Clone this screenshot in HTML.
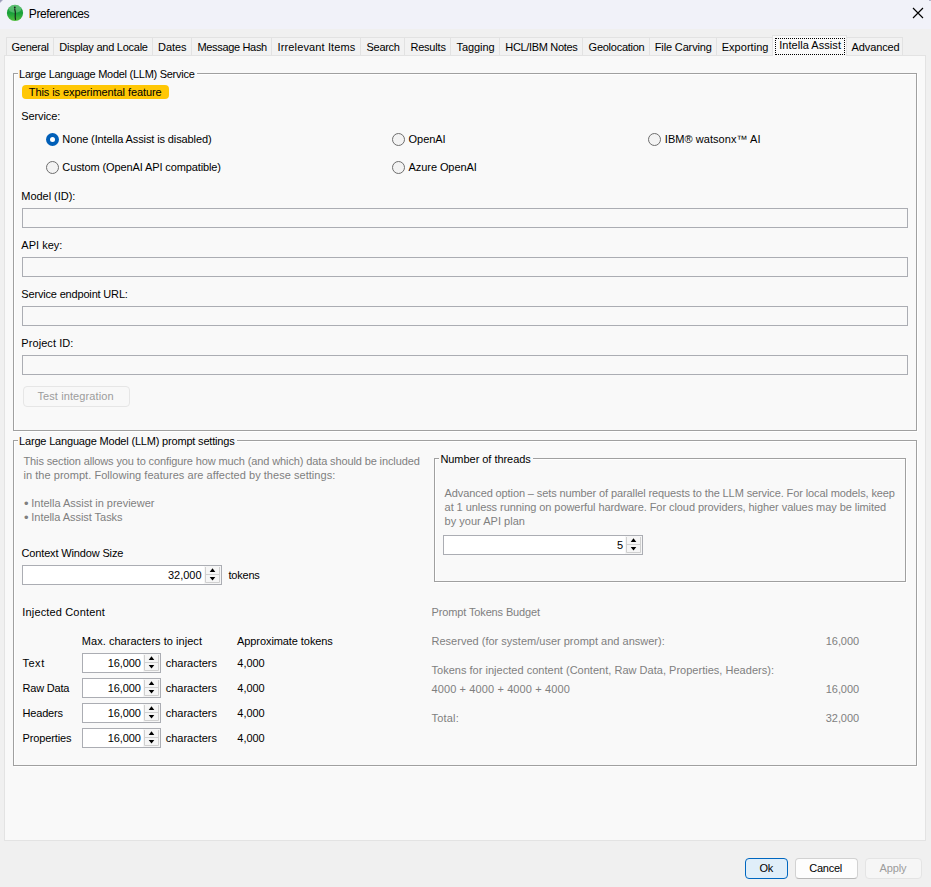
<!DOCTYPE html><html lang="en"><head><meta charset="utf-8"><title>Preferences</title><style>

*{box-sizing:border-box;margin:0;padding:0}
html,body{width:931px;height:887px;overflow:hidden;background:#f0f0f0}
body{position:relative;font-family:"Liberation Sans", sans-serif;font-size:11px;color:#000;-webkit-font-smoothing:antialiased}
.a{position:absolute}
.t{position:absolute;white-space:nowrap;line-height:12px;height:12px}
#titlebar{left:0;top:0;width:931px;height:29px;background:#f1f2f9}
#pane{left:4px;top:55px;width:922px;height:786px;background:#f9f9f9;border:1px solid #e3e3e3}
.tab{top:37px;height:18px;background:#f2f2f2;border:1px solid #e2e2e2;border-bottom:none}
.tabsel{top:35px;height:21px;background:#f9f9f9;border:1px solid #e3e3e3;border-bottom:none}
.focus{left:775px;top:38px;width:70px;height:17px;border:1px dotted #000}
.gb{border:1px solid #a0a0a0;box-shadow:1px 1px 0 #fff, inset 1px 1px 0 #fff}
.gap{background:#f9f9f9;height:3px}
.badge{left:22px;top:85px;width:147px;height:14px;border-radius:4px;background:#ffc705}
.radio{width:13px;height:13px;border-radius:50%;border:1px solid #6e6e6e;background:#f3f3f3}
.radio.on{border:none;background:#005fb8}
.radio.on::after{content:"";position:absolute;left:4px;top:4px;width:5px;height:5px;border-radius:50%;background:#fff}
.inp{left:22px;width:886px;height:20px;border:1px solid #abadb3;background:#f9f9f9}
.spin{height:20px;border:1px solid #abadb3;background:#fff}
.sbz{position:absolute;right:0;top:0}
.btn{height:21px;border-radius:4px}

</style></head><body>
<div class="a" id="titlebar"></div>
<svg class="a" style="left:6px;top:4px" width="18" height="18" viewBox="0 0 18 18">
<defs><linearGradient id="g" x1="0" y1="0" x2="0" y2="1"><stop offset="0" stop-color="#35b04e"/><stop offset="0.5" stop-color="#18a03a"/><stop offset="1" stop-color="#52be3e"/></linearGradient></defs>
<circle cx="9" cy="8.9" r="8.1" fill="url(#g)"/>
<ellipse cx="9" cy="5" rx="6.2" ry="3.9" fill="#fff" fill-opacity="0.22"/>
<circle cx="8.8" cy="3.5" r="0.9" fill="#18281a"/>
<path d="M8.7 5 Q9.6 8 9.3 10.5 Q9 13.5 9.5 15.4" stroke="#18281a" stroke-width="1.2" fill="none" stroke-linecap="round"/>
</svg>
<div class="a" style="left:0;top:0;width:3px;height:3px;clip-path:polygon(0 0,100% 0,0 100%);background:linear-gradient(135deg,#8f8fae,#d0d0e0)"></div>
<div class="a" style="left:929px;top:0;width:2px;height:1px;background:#b4b4c8"></div>
<svg class="a" style="left:912px;top:7px" width="12" height="12" viewBox="0 0 12 12"><path d="M1 1 L11 11 M11 1 L1 11" stroke="#000" stroke-width="1.15" fill="none"/></svg>
<div class="a" id="pane"></div>
<div class="a tab" style="left:6px;width:48px"></div>
<div class="a tab" style="left:53px;width:100px"></div>
<div class="a tab" style="left:152px;width:40px"></div>
<div class="a tab" style="left:191px;width:81px"></div>
<div class="a tab" style="left:271px;width:90px"></div>
<div class="a tab" style="left:360px;width:45px"></div>
<div class="a tab" style="left:404px;width:47px"></div>
<div class="a tab" style="left:450px;width:50px"></div>
<div class="a tab" style="left:499px;width:84px"></div>
<div class="a tab" style="left:582px;width:68px"></div>
<div class="a tab" style="left:649px;width:68px"></div>
<div class="a tab" style="left:716px;width:58px"></div>
<div class="a tab" style="left:846px;width:57px"></div>
<div class="a tabsel" style="left:772px;width:75px"></div>
<div class="a focus"></div>
<div class="a gb" style="left:13px;top:73px;width:904px;height:358px"></div>
<div class="a gap" style="left:18px;top:72px;width:179px"></div>
<div class="a gb" style="left:13px;top:440px;width:904px;height:326px"></div>
<div class="a gap" style="left:18px;top:439px;width:219px"></div>
<div class="a gb" style="left:434px;top:458px;width:472px;height:124px"></div>
<div class="a gap" style="left:439px;top:457px;width:94px"></div>
<div class="a badge"></div>
<div class="a radio on" style="left:46px;top:133px"></div>
<div class="a radio" style="left:46px;top:161px"></div>
<div class="a radio" style="left:392px;top:133px"></div>
<div class="a radio" style="left:392px;top:161px"></div>
<div class="a radio" style="left:648px;top:133px"></div>
<div class="a inp" style="top:208px"></div>
<div class="a inp" style="top:257px"></div>
<div class="a inp" style="top:306px"></div>
<div class="a inp" style="top:355px"></div>
<div class="a btn" style="left:23px;top:386px;width:107px;border:1px solid #e6e6e6;background:#f8f8f8"></div>
<div class="a spin" style="left:22px;top:565px;width:200px"><svg class="sbz" width="17" height="18" viewBox="0 0 17 18"><rect width="17" height="18" fill="#f6f6f6"/><path d="M1.5 1V16.5H15.5V1M1.5 8.5H15.5" fill="none" stroke="#d0d0d0"/><path d="M5.7 6H11.3L8.5 2.3Z M5.7 11.1H11.3L8.5 14.6Z" fill="#000"/></svg></div>
<div class="a spin" style="left:82px;top:653px;width:79px"><svg class="sbz" width="17" height="18" viewBox="0 0 17 18"><rect width="17" height="18" fill="#f6f6f6"/><path d="M1.5 1V16.5H15.5V1M1.5 8.5H15.5" fill="none" stroke="#d0d0d0"/><path d="M5.7 6H11.3L8.5 2.3Z M5.7 11.1H11.3L8.5 14.6Z" fill="#000"/></svg></div>
<div class="a spin" style="left:82px;top:678px;width:79px"><svg class="sbz" width="17" height="18" viewBox="0 0 17 18"><rect width="17" height="18" fill="#f6f6f6"/><path d="M1.5 1V16.5H15.5V1M1.5 8.5H15.5" fill="none" stroke="#d0d0d0"/><path d="M5.7 6H11.3L8.5 2.3Z M5.7 11.1H11.3L8.5 14.6Z" fill="#000"/></svg></div>
<div class="a spin" style="left:82px;top:703px;width:79px"><svg class="sbz" width="17" height="18" viewBox="0 0 17 18"><rect width="17" height="18" fill="#f6f6f6"/><path d="M1.5 1V16.5H15.5V1M1.5 8.5H15.5" fill="none" stroke="#d0d0d0"/><path d="M5.7 6H11.3L8.5 2.3Z M5.7 11.1H11.3L8.5 14.6Z" fill="#000"/></svg></div>
<div class="a spin" style="left:82px;top:728px;width:79px"><svg class="sbz" width="17" height="18" viewBox="0 0 17 18"><rect width="17" height="18" fill="#f6f6f6"/><path d="M1.5 1V16.5H15.5V1M1.5 8.5H15.5" fill="none" stroke="#d0d0d0"/><path d="M5.7 6H11.3L8.5 2.3Z M5.7 11.1H11.3L8.5 14.6Z" fill="#000"/></svg></div>
<div class="a spin" style="left:443px;top:535px;width:200px"><svg class="sbz" width="17" height="18" viewBox="0 0 17 18"><rect width="17" height="18" fill="#f6f6f6"/><path d="M1.5 1V16.5H15.5V1M1.5 8.5H15.5" fill="none" stroke="#d0d0d0"/><path d="M5.7 6H11.3L8.5 2.3Z M5.7 11.1H11.3L8.5 14.6Z" fill="#000"/></svg></div>
<div class="a btn" style="left:745px;top:858px;width:43px;border:1px solid #0067c0;background:#e0eef9"></div>
<div class="a btn" style="left:795px;top:858px;width:63px;border:1px solid #d2d2d2;border-bottom-color:#b8b8b8;background:#fdfdfd"></div>
<div class="a btn" style="left:865px;top:858px;width:57px;border:1px solid #e4e4e4;background:#f6f6f6"></div>
<span class="t" id="t0" style="left:28.80px;top:8.0px;font-size:12px;letter-spacing:-0.391px;">Preferences</span>
<span class="t" id="t1" style="left:11.60px;top:41px;letter-spacing:-0.306px;">General</span>
<span class="t" id="t2" style="left:59.30px;top:41px;letter-spacing:-0.253px;">Display and Locale</span>
<span class="t" id="t3" style="left:158.10px;top:41px;letter-spacing:-0.070px;">Dates</span>
<span class="t" id="t4" style="left:197.40px;top:41px;letter-spacing:-0.323px;">Message Hash</span>
<span class="t" id="t5" style="left:277.50px;top:41px;letter-spacing:0.137px;">Irrelevant Items</span>
<span class="t" id="t6" style="left:366.60px;top:41px;letter-spacing:-0.327px;">Search</span>
<span class="t" id="t7" style="left:410.40px;top:41px;letter-spacing:-0.198px;">Results</span>
<span class="t" id="t8" style="left:456.60px;top:41px;letter-spacing:-0.092px;">Tagging</span>
<span class="t" id="t9" style="left:505.30px;top:41px;letter-spacing:-0.325px;">HCL/IBM Notes</span>
<span class="t" id="t10" style="left:588.60px;top:41px;letter-spacing:-0.256px;">Geolocation</span>
<span class="t" id="t11" style="left:654.80px;top:41px;letter-spacing:-0.145px;">File Carving</span>
<span class="t" id="t12" style="left:721.70px;top:41px;letter-spacing:0.035px;">Exporting</span>
<span class="t" id="t13" style="left:779.20px;top:39px;letter-spacing:0.047px;">Intella Assist</span>
<span class="t" id="t14" style="left:851.60px;top:41px;letter-spacing:-0.130px;">Advanced</span>
<span class="t" id="t15" style="left:19.10px;top:68px;letter-spacing:-0.273px;">Large Language Model (LLM) Service</span>
<span class="t" id="t16" style="left:28.80px;top:86px;letter-spacing:-0.083px;">This is experimental feature</span>
<span class="t" id="t17" style="left:21.30px;top:110px;letter-spacing:-0.106px;">Service:</span>
<span class="t" id="t18" style="left:62.30px;top:133px;letter-spacing:-0.111px;">None (Intella Assist is disabled)</span>
<span class="t" id="t19" style="left:62.30px;top:161px;letter-spacing:-0.114px;">Custom (OpenAI API compatible)</span>
<span class="t" id="t20" style="left:408.60px;top:133px;letter-spacing:-0.069px;">OpenAI</span>
<span class="t" id="t21" style="left:408.60px;top:161px;letter-spacing:-0.083px;">Azure OpenAI</span>
<span class="t" id="t22" style="left:664.80px;top:133px;letter-spacing:0.049px;">IBM® watsonx™ AI</span>
<span class="t" id="t23" style="left:21.30px;top:190px;letter-spacing:-0.037px;">Model (ID):</span>
<span class="t" id="t24" style="left:21.30px;top:239px;letter-spacing:0.016px;">API key:</span>
<span class="t" id="t25" style="left:21.30px;top:288px;letter-spacing:-0.174px;">Service endpoint URL:</span>
<span class="t" id="t26" style="left:21.30px;top:337px;letter-spacing:0.076px;">Project ID:</span>
<span class="t" id="t27" style="left:37.40px;top:390px;color:#9c9c9c;letter-spacing:0.106px;">Test integration</span>
<span class="t" id="t28" style="left:19.10px;top:435px;letter-spacing:-0.185px;">Large Language Model (LLM) prompt settings</span>
<span class="t" id="t29" style="left:23.50px;top:455px;color:#7f7f7f;letter-spacing:-0.122px;">This section allows you to configure how much (and which) data should be included</span>
<span class="t" id="t30" style="left:23.50px;top:469px;color:#7f7f7f;letter-spacing:0.040px;">in the prompt. Following features are affected by these settings:</span>
<span class="t" id="t31" style="left:23.90px;top:498px;color:#7f7f7f;font-size:13px;">•</span>
<span class="t" id="t32" style="left:31.30px;top:497px;color:#7f7f7f;letter-spacing:-0.015px;">Intella Assist in previewer</span>
<span class="t" id="t33" style="left:23.90px;top:512px;color:#7f7f7f;font-size:13px;">•</span>
<span class="t" id="t34" style="left:31.30px;top:511px;color:#7f7f7f;letter-spacing:-0.046px;">Intella Assist Tasks</span>
<span class="t" id="t35" style="left:21.50px;top:547px;letter-spacing:-0.150px;">Context Window Size</span>
<span class="t" id="t36" style="left:168.00px;top:569px;letter-spacing:-0.026px;">32,000</span>
<span class="t" id="t37" style="left:228.40px;top:569px;letter-spacing:-0.187px;">tokens</span>
<span class="t" id="t38" style="left:22.30px;top:606px;letter-spacing:0.155px;">Injected Content</span>
<span class="t" id="t39" style="left:81.80px;top:635px;letter-spacing:0.039px;">Max. characters to inject</span>
<span class="t" id="t40" style="left:237.00px;top:635px;letter-spacing:-0.079px;">Approximate tokens</span>
<span class="t" id="t41" style="left:22.50px;top:657px;letter-spacing:0.503px;">Text</span>
<span class="t" id="t42" style="left:107.80px;top:657px;letter-spacing:-0.093px;">16,000</span>
<span class="t" id="t43" style="left:165.80px;top:657px;letter-spacing:-0.026px;">characters</span>
<span class="t" id="t44" style="left:237.30px;top:657px;letter-spacing:-0.026px;">4,000</span>
<span class="t" id="t45" style="left:22.50px;top:682px;letter-spacing:-0.187px;">Raw Data</span>
<span class="t" id="t46" style="left:107.80px;top:682px;letter-spacing:-0.093px;">16,000</span>
<span class="t" id="t47" style="left:165.80px;top:682px;letter-spacing:-0.026px;">characters</span>
<span class="t" id="t48" style="left:237.30px;top:682px;letter-spacing:-0.026px;">4,000</span>
<span class="t" id="t49" style="left:22.50px;top:707px;letter-spacing:-0.168px;">Headers</span>
<span class="t" id="t50" style="left:107.80px;top:707px;letter-spacing:-0.093px;">16,000</span>
<span class="t" id="t51" style="left:165.80px;top:707px;letter-spacing:-0.026px;">characters</span>
<span class="t" id="t52" style="left:237.30px;top:707px;letter-spacing:-0.026px;">4,000</span>
<span class="t" id="t53" style="left:22.50px;top:732px;letter-spacing:-0.114px;">Properties</span>
<span class="t" id="t54" style="left:107.80px;top:732px;letter-spacing:-0.093px;">16,000</span>
<span class="t" id="t55" style="left:165.80px;top:732px;letter-spacing:-0.026px;">characters</span>
<span class="t" id="t56" style="left:237.30px;top:732px;letter-spacing:-0.026px;">4,000</span>
<span class="t" id="t57" style="left:440.40px;top:453px;letter-spacing:-0.042px;">Number of threads</span>
<span class="t" id="t58" style="left:444.60px;top:487px;color:#7f7f7f;letter-spacing:-0.109px;">Advanced option – sets number of parallel requests to the LLM service. For local models, keep</span>
<span class="t" id="t59" style="left:444.60px;top:501px;color:#7f7f7f;letter-spacing:-0.067px;">at 1 unless running on powerful hardware. For cloud providers, higher values may be limited</span>
<span class="t" id="t60" style="left:444.60px;top:515px;color:#7f7f7f;letter-spacing:0.012px;">by your API plan</span>
<span class="t" id="t61" style="left:617.00px;top:539px;letter-spacing:0.375px;">5</span>
<span class="t" id="t62" style="left:431.50px;top:606px;color:#7f7f7f;letter-spacing:-0.130px;">Prompt Tokens Budget</span>
<span class="t" id="t63" style="left:431.50px;top:635px;color:#7f7f7f;letter-spacing:0.008px;">Reserved (for system/user prompt and answer):</span>
<span class="t" id="t64" style="left:825.80px;top:635px;color:#7f7f7f;letter-spacing:-0.076px;">16,000</span>
<span class="t" id="t65" style="left:431.50px;top:664px;color:#7f7f7f;letter-spacing:0.019px;">Tokens for injected content (Content, Raw Data, Properties, Headers):</span>
<span class="t" id="t66" style="left:431.50px;top:683px;color:#7f7f7f;letter-spacing:0.116px;">4000 + 4000 + 4000 + 4000</span>
<span class="t" id="t67" style="left:825.80px;top:683px;color:#7f7f7f;letter-spacing:-0.076px;">16,000</span>
<span class="t" id="t68" style="left:431.50px;top:712px;color:#7f7f7f;letter-spacing:0.201px;">Total:</span>
<span class="t" id="t69" style="left:825.80px;top:712px;color:#7f7f7f;letter-spacing:-0.076px;">32,000</span>
<span class="t" id="t70" style="left:759.40px;top:862px;letter-spacing:-0.131px;">Ok</span>
<span class="t" id="t71" style="left:809.20px;top:862px;letter-spacing:-0.225px;">Cancel</span>
<span class="t" id="t72" style="left:879.40px;top:862px;color:#9c9c9c;letter-spacing:-0.086px;">Apply</span>
</body></html>
